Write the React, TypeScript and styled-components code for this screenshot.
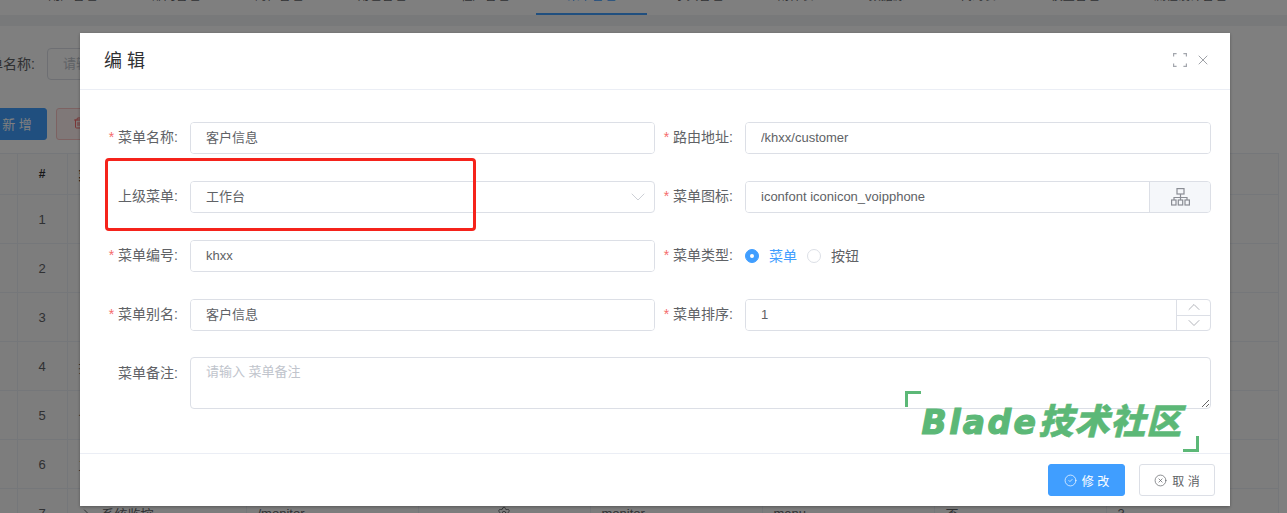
import styled, { createGlobalStyle } from "styled-components";
import {
  ChevronDown,
  ChevronRight,
  ChevronUp,
  CircleCheck,
  CircleX,
  Plus,
  Settings,
  Trash2,
  X,
} from "lucide-react";

const FONT = `"Liberation Sans", "Noto Sans CJK SC", sans-serif`;

const GlobalStyle = createGlobalStyle`
  html, body {
    margin: 0;
    background: #fff;
    font-family: ${FONT};
  }
`;

interface TabItem {
  name: string;
  active?: boolean;
}

interface MenuRow {
  id: number;
  name: string;
  path: string;
  code: string;
  kind: string;
  blank: string;
  sort: number;
  tree?: boolean;
}

const tabs: TabItem[] = [
  { name: "用户管理" },
  { name: "部门管理" },
  { name: "岗位管理" },
  { name: "角色管理" },
  { name: "租户管理" },
  { name: "菜单管理", active: true },
  { name: "字典管理" },
  { name: "附件表" },
  { name: "数据源" },
  { name: "代码表" },
  { name: "模型管理" },
  { name: "流程设计管理" },
];

const rows: MenuRow[] = [
  { id: 1, name: "工作台", path: "/wel", code: "desk", kind: "menu", blank: "否", sort: 1, tree: true },
  { id: 2, name: "客户管理", path: "/khgl", code: "khgl", kind: "menu", blank: "否", sort: 1, tree: true },
  { id: 3, name: "系统管理", path: "/system", code: "system", kind: "menu", blank: "否", sort: 2, tree: true },
  { id: 4, name: "接口文档", path: "/doc", code: "doc", kind: "menu", blank: "否", sort: 1 },
  { id: 5, name: "个人中心", path: "/info", code: "info", kind: "menu", blank: "否", sort: 1 },
  { id: 6, name: "工作流程", path: "/flow", code: "flow", kind: "menu", blank: "否", sort: 1 },
  { id: 7, name: "系统监控", path: "/monitor", code: "monitor", kind: "menu", blank: "否", sort: 3, tree: true },
];

export default function App() {
  return (
    <Root>
      <GlobalStyle />
      <Page>
        <TabBar>
          {tabs.map((tab) => (
            <Tab key={tab.name} $active={tab.active}>
              {tab.name}
            </Tab>
          ))}
        </TabBar>
        <GreyBand />
        <SearchRow>
          <SearchLabel>菜单名称:</SearchLabel>
          <SearchInput placeholder="请输入 菜单名称" readOnly />
        </SearchRow>
        <Toolbar>
          <AddButton>
            <Plus size={12} />新 增
          </AddButton>
          <DeleteButton>
            <Trash2 size={12} />删 除
          </DeleteButton>
        </Toolbar>
        <MenuTable>
          <colgroup>
            <col width={50} />
            <col width={50} />
            <col width={179} />
            <col width={172} />
            <col width={172} />
            <col width={172} />
            <col width={172} />
            <col width={172} />
            <col width={172} />
          </colgroup>
          <thead>
            <tr>
              <th />
              <IndexHead>#</IndexHead>
              <th>菜单名称</th>
              <th>路由地址</th>
              <CenterHead>菜单图标</CenterHead>
              <th>菜单编号</th>
              <th>菜单类型</th>
              <th>新窗口</th>
              <th>排序</th>
            </tr>
          </thead>
          <tbody>
            {rows.map((row) => (
              <tr key={row.id}>
                <td />
                <IndexCell>{row.id}</IndexCell>
                <td>
                  <NameWrap $tree={row.tree}>
                    {row.tree && <ChevronRight size={12} color="#606266" />}
                    {row.name}
                  </NameWrap>
                </td>
                <td>{row.path}</td>
                <IconCell>
                  <Settings size={14} strokeWidth={1.5} color="#606266" />
                </IconCell>
                <td>{row.code}</td>
                <td>{row.kind}</td>
                <td>{row.blank}</td>
                <td>{row.sort}</td>
              </tr>
            ))}
          </tbody>
        </MenuTable>
      </Page>

      <Overlay>
        <Modal>
          <ModalHeader>
            <ModalTitle>编 辑</ModalTitle>
            <HeaderTools>
              <svg width="14" height="14" viewBox="0 0 14 14" fill="none" stroke="#a3a6ad" strokeWidth="1.2">
                <path d="M.6 3.6V.6h3M10.4.6h3v3M13.4 10.4v3h-3M3.6 13.4h-3v-3" />
              </svg>
              <X size={16} strokeWidth={1.3} color="#909399" />
            </HeaderTools>
          </ModalHeader>

          <FormGrid>
            <Field>
              <FieldLabel $required>菜单名称:</FieldLabel>
              <ControlBox>
                <BareInput $cjk value="客户信息" readOnly />
              </ControlBox>
            </Field>
            <Field>
              <FieldLabel $required>路由地址:</FieldLabel>
              <ControlBox>
                <BareInput value="/khxx/customer" readOnly />
              </ControlBox>
            </Field>

            <Field>
              <FieldLabel>上级菜单:</FieldLabel>
              <ControlBox>
                <BareInput $cjk value="工作台" readOnly />
                <SelectArrow>
                  <ChevronDown size={24} strokeWidth={0.8} color="#c0c4cc" />
                </SelectArrow>
              </ControlBox>
            </Field>
            <Field>
              <FieldLabel $required>菜单图标:</FieldLabel>
              <ControlBox>
                <BareInput value="iconfont iconicon_voipphone" readOnly />
                <AppendBox>
                  <svg width="19" height="18" viewBox="0 0 19 18" fill="none" stroke="#8a8d94" strokeWidth="1.2">
                    <rect x="6" y=".6" width="7" height="5.4" />
                    <path d="M9.5 6v3.5M3 12V9.5h13V12M9.5 9.5V12" />
                    <rect x=".6" y="12" width="4.4" height="5" />
                    <rect x="7.3" y="12" width="4.4" height="5" />
                    <rect x="14" y="12" width="4.4" height="5" />
                  </svg>
                </AppendBox>
              </ControlBox>
            </Field>

            <Field>
              <FieldLabel $required>菜单编号:</FieldLabel>
              <ControlBox>
                <BareInput value="khxx" readOnly />
              </ControlBox>
            </Field>
            <Field>
              <FieldLabel $required>菜单类型:</FieldLabel>
              <RadioGroup>
                <RadioDot $checked />
                <RadioText $checked>菜单</RadioText>
                <RadioDot />
                <RadioText>按钮</RadioText>
              </RadioGroup>
            </Field>

            <Field>
              <FieldLabel $required>菜单别名:</FieldLabel>
              <ControlBox>
                <BareInput $cjk value="客户信息" readOnly />
              </ControlBox>
            </Field>
            <Field>
              <FieldLabel $required>菜单排序:</FieldLabel>
              <ControlBox>
                <BareInput value="1" readOnly />
                <Stepper>
                  <StepButton>
                    <ChevronUp size={20} strokeWidth={1} color="#a3a6ad" />
                  </StepButton>
                  <StepButton>
                    <ChevronDown size={20} strokeWidth={1} color="#a3a6ad" />
                  </StepButton>
                </Stepper>
              </ControlBox>
            </Field>

            <Field $wide>
              <FieldLabel>菜单备注:</FieldLabel>
              <Remark placeholder="请输入 菜单备注" readOnly />
            </Field>
          </FormGrid>

          <ModalFooter>
            <SubmitButton>
              <CircleCheck size={13} strokeWidth={1.3} />修 改
            </SubmitButton>
            <CancelButton>
              <CircleX size={13} strokeWidth={1.3} />取 消
            </CancelButton>
          </ModalFooter>
        </Modal>
      </Overlay>

      <Highlight />
      <Watermark>
        <WatermarkLatin>Blade</WatermarkLatin>
        <WatermarkCjk>技术社区</WatermarkCjk>
      </Watermark>
    </Root>
  );
}

const Root = styled.div`
  position: relative;
  width: 1287px;
  height: 513px;
  overflow: hidden;
  background: #fff;
  color: #606266;
  font-family: ${FONT};
`;

// the page behind the dialog is scrolled a bit up and to the right
const Page = styled.div`
  width: 1340px;
  margin: -16px 0 0 -33px;
`;

const TabBar = styled.div`
  display: flex;
  height: 31px;
  padding-left: 54px;
  background: #fff;
`;

const Tab = styled.div<{ $active?: boolean }>`
  height: 31px;
  box-sizing: border-box;
  padding: 0 ${(p) => (p.$active ? "31.5px" : "27.5px")};
  font-size: 12px;
  line-height: 24px;
  white-space: nowrap;
  color: ${(p) => (p.$active ? "#409eff" : "#606266")};
  border-bottom: 2px solid ${(p) => (p.$active ? "#409eff" : "transparent")};
`;

const GreyBand = styled.div`
  height: 11px;
  background: #f0f2f5;
`;

const SearchRow = styled.div`
  display: flex;
  align-items: center;
  padding-top: 22px;
`;

const SearchLabel = styled.label`
  width: 68px;
  padding-right: 12px;
  text-align: right;
  font-size: 14px;
  line-height: 30px;
`;

const SearchInput = styled.input`
  width: 200px;
  height: 32px;
  box-sizing: border-box;
  padding: 0 15px 2px;
  border: 1px solid #dcdfe6;
  border-radius: 4px;
  font: 13px ${FONT};
  outline: none;
  &::placeholder {
    color: #c0c4cc;
  }
`;

const Toolbar = styled.div`
  display: flex;
  gap: 9px;
  padding-top: 28px;
`;

const ToolButton = styled.button`
  display: flex;
  align-items: center;
  justify-content: center;
  gap: 5px;
  height: 32px;
  padding: 0 0 2px;
  border-radius: 3px;
  font: 13px ${FONT};
`;

const AddButton = styled(ToolButton)`
  width: 80px;
  border: 1px solid #409eff;
  background: #409eff;
  color: #fff;
  padding-left: 3px;
`;

const DeleteButton = styled(ToolButton)`
  width: 80px;
  border: 1px solid #fbc4c4;
  background: #fef0f0;
  color: #f56c6c;
`;

const MenuTable = styled.table`
  width: 1311px;
  margin-top: 13px;
  table-layout: fixed;
  border-collapse: collapse;
  background: #fafafa;
  font-size: 13px;

  th,
  td {
    border: 1px solid #ebeef5;
    padding: 0 11px;
    text-align: left;
    white-space: nowrap;
    color: #606266;
  }
  th {
    height: 40px;
    font-weight: 700;
    color: #303133;
  }
  td {
    height: 48px;
  }
  tr > *:first-child {
    border-left: none;
  }
`;

const IndexHead = styled.th`
  && {
    text-align: center;
    padding: 0;
    font-size: 12px;
  }
`;

const CenterHead = styled.th`
  && {
    text-align: center;
  }
`;

const IndexCell = styled.td`
  && {
    text-align: center;
    padding: 0;
  }
`;

const IconCell = styled.td`
  && {
    text-align: center;
    line-height: 0;
  }
`;

const NameWrap = styled.span<{ $tree?: boolean }>`
  display: flex;
  align-items: center;
  gap: 10px;
  padding-left: ${(p) => (p.$tree ? "1px" : "0")};
`;

const Overlay = styled.div`
  position: absolute;
  inset: 0;
  padding: 33px 0 0 80px;
  background: rgba(0, 0, 0, 0.5);
`;

const Modal = styled.div`
  width: 1150px;
  background: #fff;
  box-shadow: 0 1px 3px rgba(0, 0, 0, 0.3);
`;

const ModalHeader = styled.div`
  display: flex;
  align-items: center;
  justify-content: space-between;
  box-sizing: border-box;
  height: 57px;
  padding: 0 19px 3px 24px;
  border-bottom: 1px solid #ebeef5;
`;

const ModalTitle = styled.span`
  font-size: 18px;
  margin-bottom: 1px;
  color: #303133;
`;

const HeaderTools = styled.div`
  display: flex;
  align-items: center;
  gap: 8px;
`;

const FormGrid = styled.div`
  display: grid;
  grid-template-columns: 555px 556px;
  row-gap: 27px;
  padding: 32px 19px 44px 20px;
  border-bottom: 1px solid #ebeef5;
`;

const Field = styled.div<{ $wide?: boolean }>`
  display: flex;
  min-width: 0;
  grid-column: ${(p) => (p.$wide ? "1 / -1" : "auto")};
  margin-top: ${(p) => (p.$wide ? "-1px" : "0")};
  label {
    line-height: ${(p) => (p.$wide ? "32px" : "30px")};
  }
`;

const FieldLabel = styled.label<{ $required?: boolean }>`
  flex: 0 0 90px;
  box-sizing: border-box;
  padding-right: 12px;
  text-align: right;
  font-size: 14px;
  white-space: nowrap;
  color: #606266;
  &::before {
    content: "${(p) => (p.$required ? "*" : "")}";
    margin-right: 4px;
    color: #f56c6c;
  }
`;

const ControlBox = styled.div`
  display: flex;
  flex: 1;
  min-width: 0;
  height: 32px;
  box-sizing: border-box;
  border: 1px solid #dcdfe6;
  border-radius: 4px;
  overflow: hidden;
  background: #fff;
`;

const BareInput = styled.input<{ $cjk?: boolean }>`
  flex: 1;
  min-width: 0;
  padding: 0 15px ${(p) => (p.$cjk ? "4px" : "2px")};
  border: none;
  outline: none;
  font: 13px ${FONT};
  color: #606266;
`;

const SelectArrow = styled.span`
  display: flex;
  align-items: center;
  padding-right: 4px;
`;

const AppendBox = styled.span`
  display: flex;
  align-items: center;
  justify-content: center;
  width: 60px;
  border-left: 1px solid #dcdfe6;
  background: #f5f7fa;
`;

const Stepper = styled.span`
  display: flex;
  flex-direction: column;
  width: 33px;
  border-left: 1px solid #dcdfe6;
`;

const StepButton = styled.span`
  display: flex;
  flex: 1;
  min-height: 0;
  overflow: hidden;
  align-items: center;
  justify-content: center;
  svg {
    flex: none;
  }
  & + & {
    border-top: 1px solid #dcdfe6;
  }
`;

const RadioGroup = styled.div`
  display: flex;
  align-items: center;
  height: 32px;
`;

const RadioDot = styled.span<{ $checked?: boolean }>`
  position: relative;
  box-sizing: border-box;
  width: 14px;
  height: 14px;
  border-radius: 50%;
  border: 1px solid ${(p) => (p.$checked ? "#409eff" : "#dcdfe6")};
  background: ${(p) => (p.$checked ? "#409eff" : "#fff")};
  &::after {
    content: "";
    position: absolute;
    left: 4px;
    top: 4px;
    width: 4px;
    height: 4px;
    border-radius: 50%;
    background: #fff;
  }
`;

const RadioText = styled.span<{ $checked?: boolean }>`
  margin: 0 10px;
  padding-bottom: 3px;
  font-size: 14px;
  color: ${(p) => (p.$checked ? "#409eff" : "#606266")};
`;

const Remark = styled.textarea`
  flex: 1;
  height: 52px;
  box-sizing: border-box;
  padding: 4px 15px;
  border: 1px solid #dcdfe6;
  border-radius: 4px;
  font: 13px/20px ${FONT};
  color: #606266;
  outline: none;
  &::placeholder {
    color: #c0c4cc;
  }
`;

const ModalFooter = styled.div`
  display: flex;
  justify-content: flex-end;
  gap: 14px;
  padding: 10px 15px 10px 0;
`;

const FooterButton = styled.button`
  display: flex;
  align-items: center;
  justify-content: center;
  gap: 5px;
  height: 32px;
  padding: 0;
  border-radius: 3px;
  font: 12px ${FONT};
`;

const SubmitButton = styled(FooterButton)`
  width: 77px;
  border: 1px solid #409eff;
  background: #409eff;
  color: #fff;
`;

const CancelButton = styled(FooterButton)`
  width: 76px;
  border: 1px solid #dcdfe6;
  background: #fff;
  color: #606266;
`;

// red frame drawn over the screenshot by its author
const Highlight = styled.div`
  position: absolute;
  left: 105px;
  top: 158px;
  width: 371px;
  height: 73px;
  box-sizing: border-box;
  border: 3px solid #f5231b;
  border-radius: 4px;
`;

const Watermark = styled.div`
  position: absolute;
  left: 905px;
  top: 391px;
  width: 294px;
  height: 61px;
  line-height: 56px;
  box-sizing: border-box;
  display: flex;
  align-items: baseline;
  justify-content: center;
  color: #5cb877;
  white-space: nowrap;

  &::before,
  &::after {
    content: "";
    position: absolute;
    width: 13px;
    height: 13px;
    border: 0 solid #5cb877;
  }
  &::before {
    left: 0;
    top: 0;
    border-width: 3px 0 0 3px;
  }
  &::after {
    right: 0;
    bottom: 0;
    border-width: 0 3px 3px 0;
  }
`;

const WatermarkLatin = styled.span`
  font: italic 700 33px/56px "DejaVu Sans", sans-serif;
  letter-spacing: 2.4px;
  -webkit-text-stroke: 1.2px #5cb877;
`;

const WatermarkCjk = styled.span`
  font: italic 900 35px/56px "Noto Sans CJK SC", sans-serif;
  letter-spacing: 1px;
  -webkit-text-stroke: 0.5px #5cb877;
`;
